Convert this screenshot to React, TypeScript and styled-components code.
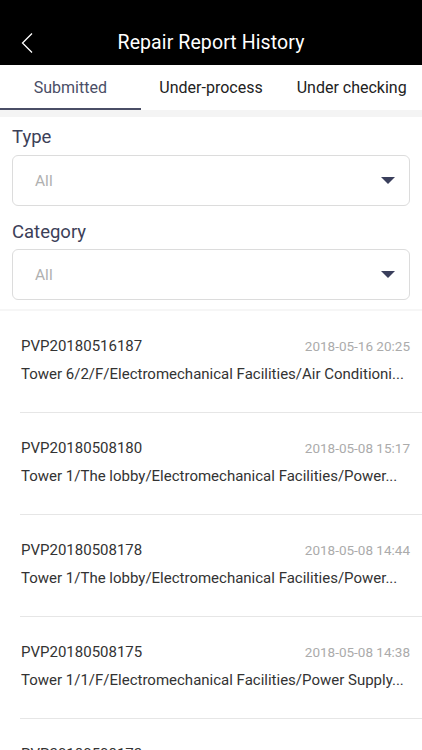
import styled, { createGlobalStyle } from 'styled-components';

const GlobalStyle = createGlobalStyle`
  html, body {
    margin: 0;
    padding: 0;
    background: #ffffff;
  }
  body {
    font-family: Roboto, "Noto Sans", "Liberation Sans", sans-serif;
    -webkit-font-smoothing: antialiased;
  }
`;

const tabs = ['Submitted', 'Under-process', 'Under checking'];

// place strings are already shortened the way the app shows them
const reports = [
  {
    id: 'PVP20180516187',
    time: '2018-05-16 20:25',
    place: 'Tower 6/2/F/Electromechanical Facilities/Air Conditioni...',
  },
  {
    id: 'PVP20180508180',
    time: '2018-05-08 15:17',
    place: 'Tower 1/The lobby/Electromechanical Facilities/Power...',
  },
  {
    id: 'PVP20180508178',
    time: '2018-05-08 14:44',
    place: 'Tower 1/The lobby/Electromechanical Facilities/Power...',
  },
  {
    id: 'PVP20180508175',
    time: '2018-05-08 14:38',
    place: 'Tower 1/1/F/Electromechanical Facilities/Power Supply...',
  },
  {
    id: 'PVP20180508172',
    time: '2018-05-08 14:30',
    place: 'Tower 1/1/F/Electromechanical Facilities/Power Supply...',
  },
];

const App = () => {
  return (
    <>
      <GlobalStyle />
      <Page>
        <Header>
          <BackButton>
            <svg width="14" height="22" viewBox="0 0 14 22">
              <path d="M12 1.5 L2.5 11 L12 20.5" fill="none" stroke="#ffffff" strokeWidth="1.3" />
            </svg>
          </BackButton>
          <Title>Repair Report History</Title>
        </Header>

        <TabBar>
          {tabs.map((t, i) => (
            <Tab key={t} active={i === 0}>
              {t}
            </Tab>
          ))}
        </TabBar>
        <Gap />

        <Filters>
          <Label>Type</Label>
          <Select>
            <Placeholder>All</Placeholder>
            <Caret />
          </Select>
          <Label spaced>Category</Label>
          <Select>
            <Placeholder>All</Placeholder>
            <Caret />
          </Select>
        </Filters>
        <ThinGap />

        <List>
          {reports.map((r) => (
            <Item key={r.id}>
              <ItemTop>
                <ReportId>{r.id}</ReportId>
                <ReportTime>{r.time}</ReportTime>
              </ItemTop>
              <Place>{r.place}</Place>
            </Item>
          ))}
        </List>
      </Page>
    </>
  );
};

export default App;

const Page = styled.div`
  width: 422px;
  height: 750px;
  overflow: hidden;
  background: #fff;
`;

const Header = styled.div`
  position: relative;
  height: 65px;
  background: #000;
  display: flex;
  align-items: center;
  justify-content: center;
  padding-top: 20px;
  box-sizing: border-box;
`;

const BackButton = styled.div`
  position: absolute;
  left: 20px;
  top: 32px;
  display: flex;
`;

const Title = styled.h1`
  margin: 0;
  color: #fff;
  font-size: 19.5px;
  font-weight: 400;
  letter-spacing: 0.1px;
`;

const TabBar = styled.div`
  display: grid;
  grid-template-columns: repeat(3, 1fr);
  height: 45px;
  background: #fff;
`;

const Tab = styled.div<{ active?: boolean }>`
  display: flex;
  align-items: center;
  justify-content: center;
  font-size: 16px;
  white-space: nowrap;
  color: ${(p) => (p.active ? '#4a4e66' : '#222')};
  border-bottom: 2px solid ${(p) => (p.active ? '#4a4e66' : 'transparent')};
  padding-top: 2px;
`;

const Gap = styled.div`
  height: 7px;
  background: #f4f4f4;
`;

const ThinGap = styled.div`
  height: 2px;
  background: #f6f6f6;
`;

const Filters = styled.div`
  display: flex;
  flex-direction: column;
  padding: 8px 12px 9px 12px;
`;

const Label = styled.div<{ spaced?: boolean }>`
  font-size: 18.5px;
  line-height: 24px;
  color: #3c4058;
  margin-top: ${(p) => (p.spaced ? '14px' : '0')};
  margin-bottom: ${(p) => (p.spaced ? '5px' : '6px')};
`;

const Select = styled.div`
  display: flex;
  align-items: center;
  justify-content: space-between;
  height: 51px;
  box-sizing: border-box;
  border: 1px solid #dcdcdc;
  border-radius: 6px;
  padding: 0 14px 0 22px;
`;

const Placeholder = styled.span`
  font-size: 15.5px;
  color: #b0b0b0;
`;

const Caret = styled.span`
  width: 0;
  height: 0;
  border-left: 7px solid transparent;
  border-right: 7px solid transparent;
  border-top: 7px solid #3a3f5c;
`;

const List = styled.div`
  display: flex;
  flex-direction: column;
`;

const Item = styled.div`
  margin-left: 20px;
  padding: 25px 12px 28px 1px;
  border-bottom: 1px solid #e6e6e6;
  min-width: 0;
`;

const ItemTop = styled.div`
  display: flex;
  align-items: center;
  justify-content: space-between;
  height: 20px;
  margin-bottom: 8px;
`;

const ReportId = styled.span`
  font-size: 15px;
  color: #333;
`;

const ReportTime = styled.span`
  font-size: 13.5px;
  color: #ababab;
`;

const Place = styled.div`
  font-size: 15px;
  line-height: 20px;
  color: #333;
  white-space: nowrap;
`;
